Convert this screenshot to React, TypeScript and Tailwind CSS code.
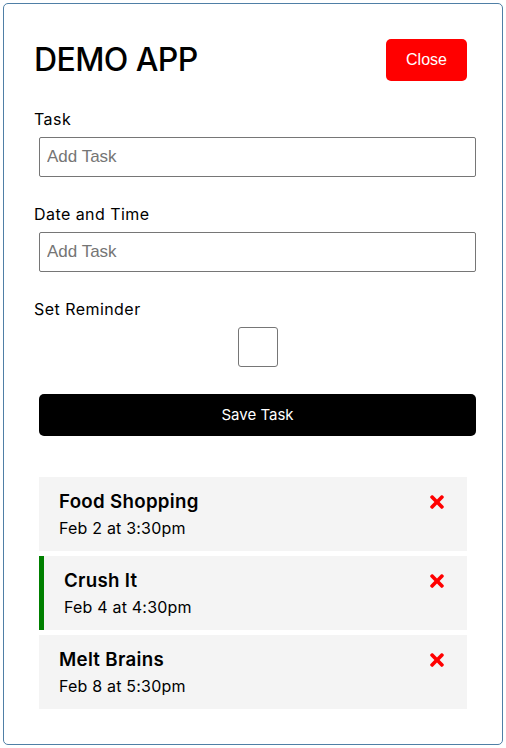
import React, { useState } from 'react';
import { FaTimes } from 'react-icons/fa';

type Task = { id: number; text: string; day: string; reminder: boolean };

const initialTasks: Task[] = [
  { id: 1, text: 'Food Shopping', day: 'Feb 2 at 3:30pm', reminder: false },
  { id: 2, text: 'Crush It', day: 'Feb 4 at 4:30pm', reminder: true },
  { id: 3, text: 'Melt Brains', day: 'Feb 8 at 5:30pm', reminder: false },
];

const body = { fontFamily: 'Inter, "Noto Sans", sans-serif' };
const arial = { fontFamily: '"Liberation Sans", Arial, sans-serif' };

export default function App() {
  const [tasks, setTasks] = useState<Task[]>(initialTasks);
  const [reminder, setReminder] = useState(false);

  const toggle = (id: number) =>
    setTasks((prev) => prev.map((t) => (t.id === id ? { ...t, reminder: !t.reminder } : t)));

  return (
    <div className="min-h-screen bg-white pt-[3px] text-black" style={body}>
      <div className="mx-auto w-[500px] rounded-[5px] border border-[#4f7fa6] p-[30px]">
        {/* Header */}
        <div className="mb-[20px] flex h-[52px] items-center justify-between">
          <h1 className="text-[32px] font-medium leading-none tracking-[-0.6px]">DEMO APP</h1>
          <button
            type="button"
            className="m-[5px] h-[42px] w-[81px] rounded-[5px] bg-[#ff0000] text-[16px] text-white"
            style={arial}
          >
            Close
          </button>
        </div>

        {/* Add form */}
        <form onSubmit={(e) => e.preventDefault()}>
          <label className="block h-[26px] text-[16px] leading-[26px] tracking-[0.45px]">Task</label>
          <input
            type="text"
            placeholder="Add Task"
            className="ml-[5px] mt-[5px] block h-[40px] w-[437px] rounded-[2px] border border-[#767676] px-[7px] text-[17px] outline-none placeholder:text-[#757575]"
            style={arial}
          />

          <label className="mt-[24px] block h-[26px] text-[16px] leading-[26px] tracking-[0.45px]">
            Date and Time
          </label>
          <input
            type="text"
            placeholder="Add Task"
            className="ml-[5px] mt-[5px] block h-[40px] w-[437px] rounded-[2px] border border-[#767676] px-[7px] text-[17px] outline-none placeholder:text-[#757575]"
            style={arial}
          />

          <label className="mt-[24px] block h-[26px] text-[16px] leading-[26px] tracking-[0.45px]">
            Set Reminder
          </label>
          <div className="ml-[5px] mt-[5px] flex w-[437px] justify-center">
            <button
              type="button"
              onClick={() => setReminder(!reminder)}
              className="h-[40px] w-[40px] rounded-[3px] border border-[#767676] bg-white"
            />
          </div>

          <button
            type="submit"
            className="ml-[5px] mt-[27px] block h-[42px] w-[437px] rounded-[5px] bg-black text-[15px] text-white"
          >
            Save Task
          </button>
        </form>

        {/* Task list */}
        <div className="mt-[41px] flex flex-col gap-[5px] pb-[5px]">
          {tasks.map((task) => (
            <div
              key={task.id}
              onDoubleClick={() => toggle(task.id)}
              className={`mx-[5px] h-[74px] cursor-pointer bg-[#f4f4f4] px-[20px] py-[10px] ${
                task.reminder ? 'border-l-[5px] border-[#008000]' : ''
              }`}
            >
              <h3 className="flex items-center justify-between text-[18.7px] font-semibold leading-[29px] tracking-[0.3px]">
                <span>{task.text}</span>
                <FaTimes
                  size={20}
                  className="text-[#ff0000]"
                  onClick={() => setTasks((prev) => prev.filter((t) => t.id !== task.id))}
                />
              </h3>
              <p className="text-[16px] leading-[25px] tracking-[0.2px]">{task.day}</p>
            </div>
          ))}
        </div>
      </div>
    </div>
  );
}
